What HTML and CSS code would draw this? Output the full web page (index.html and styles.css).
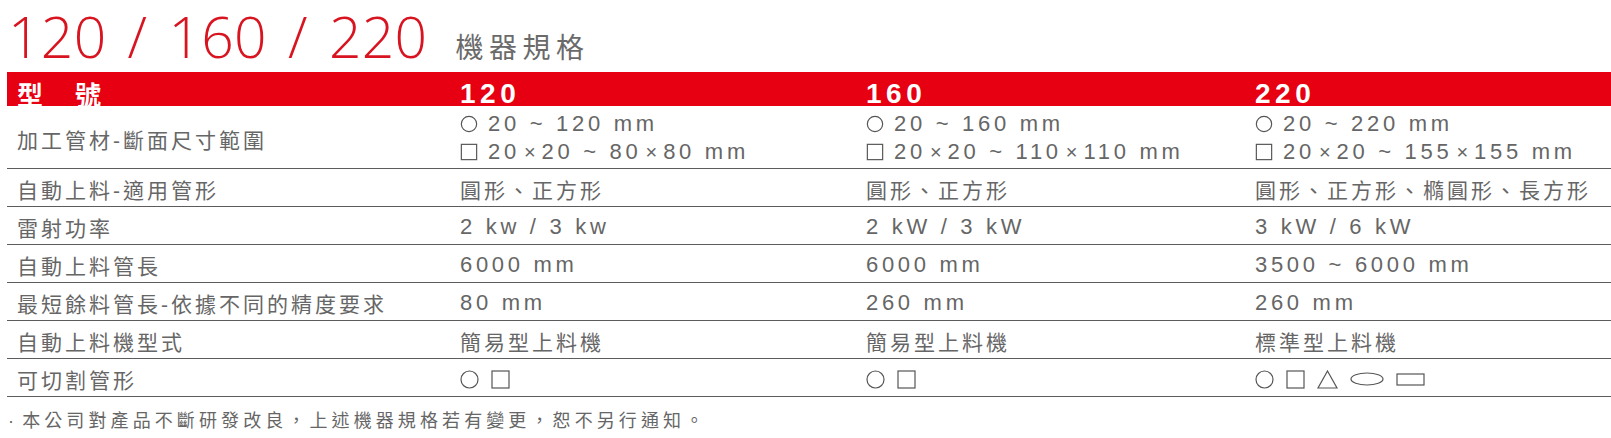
FILE: index.html
```html
<!DOCTYPE html>
<html lang="zh-Hant">
<head>
<meta charset="utf-8">
<title>120 / 160 / 220 機器規格</title>
<link rel="stylesheet" href="styles.css">
</head>
<body>
<div class="page">
  <header class="title">
    <h1 class="models">120 / 160 / 220</h1>
    <span class="sub">機器規格</span>
  </header>

  <div class="spec">
    <div class="row head">
      <div class="cell label">型　號</div>
      <div class="cell">120</div>
      <div class="cell">160</div>
      <div class="cell">220</div>
    </div>

    <div class="row tall">
      <div class="cell label">加工管材-斷面尺寸範圍</div>
      <div class="cell stack">
        <span class="line"><svg class="ic" viewBox="0 0 20 20"><circle cx="10" cy="10" r="8.5"/></svg>20 ~ 120 mm</span>
        <span class="line"><svg class="ic" viewBox="0 0 20 20"><rect x="1.5" y="1.5" width="17" height="17"/></svg>20<span class="x">×</span>20 ~ 80<span class="x">×</span>80 mm</span>
      </div>
      <div class="cell stack">
        <span class="line"><svg class="ic" viewBox="0 0 20 20"><circle cx="10" cy="10" r="8.5"/></svg>20 ~ 160 mm</span>
        <span class="line"><svg class="ic" viewBox="0 0 20 20"><rect x="1.5" y="1.5" width="17" height="17"/></svg>20<span class="x">×</span>20 ~ 110<span class="x">×</span>110 mm</span>
      </div>
      <div class="cell stack">
        <span class="line"><svg class="ic" viewBox="0 0 20 20"><circle cx="10" cy="10" r="8.5"/></svg>20 ~ 220 mm</span>
        <span class="line"><svg class="ic" viewBox="0 0 20 20"><rect x="1.5" y="1.5" width="17" height="17"/></svg>20<span class="x">×</span>20 ~ 155<span class="x">×</span>155 mm</span>
      </div>
    </div>

    <div class="row">
      <div class="cell label">自動上料-適用管形</div>
      <div class="cell cjk">圓形、正方形</div>
      <div class="cell cjk">圓形、正方形</div>
      <div class="cell cjk">圓形、正方形、橢圓形、長方形</div>
    </div>

    <div class="row">
      <div class="cell label">雷射功率</div>
      <div class="cell">2 kw / 3 kw</div>
      <div class="cell">2 kW / 3 kW</div>
      <div class="cell">3 kW / 6 kW</div>
    </div>

    <div class="row">
      <div class="cell label">自動上料管長</div>
      <div class="cell">6000 mm</div>
      <div class="cell">6000 mm</div>
      <div class="cell">3500 ~ 6000 mm</div>
    </div>

    <div class="row">
      <div class="cell label">最短餘料管長-依據不同的精度要求</div>
      <div class="cell">80 mm</div>
      <div class="cell">260 mm</div>
      <div class="cell">260 mm</div>
    </div>

    <div class="row">
      <div class="cell label">自動上料機型式</div>
      <div class="cell cjk">簡易型上料機</div>
      <div class="cell cjk">簡易型上料機</div>
      <div class="cell cjk">標準型上料機</div>
    </div>

    <div class="row">
      <div class="cell label">可切割管形</div>
      <div class="cell shapes">
        <svg class="sh" width="19" height="19" viewBox="0 0 19 19"><circle cx="9.5" cy="9.5" r="8.5"/></svg>
        <svg class="sh" width="19" height="19" viewBox="0 0 19 19"><rect x="1" y="1" width="17" height="17"/></svg>
      </div>
      <div class="cell shapes">
        <svg class="sh" width="19" height="19" viewBox="0 0 19 19"><circle cx="9.5" cy="9.5" r="8.5"/></svg>
        <svg class="sh" width="19" height="19" viewBox="0 0 19 19"><rect x="1" y="1" width="17" height="17"/></svg>
      </div>
      <div class="cell shapes">
        <svg class="sh" width="19" height="19" viewBox="0 0 19 19"><circle cx="9.5" cy="9.5" r="8.5"/></svg>
        <svg class="sh" width="19" height="19" viewBox="0 0 19 19"><rect x="1" y="1" width="17" height="17"/></svg>
        <svg class="sh" width="21" height="19" viewBox="0 0 21 19"><polygon points="10.5,1 20,18 1,18"/></svg>
        <svg class="sh" width="34" height="14" viewBox="0 0 34 14"><ellipse cx="17" cy="7" rx="16" ry="6"/></svg>
        <svg class="sh" width="29" height="13" viewBox="0 0 29 13"><rect x="1" y="1" width="27" height="11"/></svg>
      </div>
    </div>
  </div>

  <p class="note"><span class="dot">·</span> 本公司對產品不斷研發改良，上述機器規格若有變更，恕不另行通知。</p>
</div>
</body>
</html>
```

FILE: styles.css
```css
html, body {
  margin: 0;
  padding: 0;
  background: #ffffff;
}

body {
  font-family: "Liberation Sans", "Noto Sans CJK TC", sans-serif;
  color: #666666;
  overflow: hidden;
}

.page {
  padding-left: 7px;
}

.title {
  display: flex;
  align-items: baseline;
  height: 72px;
  padding-left: 1px;
}

.models {
  margin: 0;
  font-family: "Open Sans", "Roboto", "Liberation Sans", sans-serif;
  font-weight: 300;
  font-size: 57px;
  line-height: 72px;
  letter-spacing: 0.3px;
  color: #d7141f;
  word-spacing: 6px;
  white-space: nowrap;
}

.sub {
  margin-left: 28px;
  font-family: "Noto Sans CJK TC", sans-serif;
  font-size: 28px;
  letter-spacing: 5.5px;
  color: #6a6a6a;
}

.spec {
  width: 1604px;
}

.row {
  display: grid;
  grid-template-columns: 443px 406px 389px 1fr;
  height: 38px;
  border-bottom: 1px solid #5c5c5c;
  box-sizing: border-box;
  font-size: 22px;
  letter-spacing: 3.7px;
}

.label,
.cjk {
  font-size: 21px;
  letter-spacing: 3px;
}

.row.head {
  height: 34px;
  border-bottom: none;
  background: #e60012;
  color: #ffffff;
  font-weight: bold;
  font-size: 28px;
  letter-spacing: 4.5px;
}

.head .label {
  font-size: 26px;
  letter-spacing: 3px;
}

.row.tall {
  height: 63px;
}

.cell {
  display: flex;
  align-items: center;
  padding-left: 10px;
  padding-top: 3px;
  white-space: nowrap;
}

.stack {
  flex-direction: column;
  align-items: flex-start;
  justify-content: center;
  padding-top: 2px;
  line-height: 28px;
}

.line {
  display: flex;
  align-items: center;
}

.x {
  font-size: 20px;
  letter-spacing: 0;
  padding: 0 6px 0 4px;
}

.ic {
  width: 18px;
  height: 18px;
  margin-right: 10px;
  fill: none;
  stroke: #555555;
  stroke-width: 1.3;
}

.shapes {
  gap: 12px;
  padding-top: 3px;
}

.sh {
  fill: none;
  stroke: #555555;
  stroke-width: 1.2;
}

.note {
  margin: 9px 0 0 1px;
  font-family: "Noto Sans CJK TC", sans-serif;
  font-size: 18px;
  letter-spacing: 4.1px;
  color: #666666;
}

.dot {
  font-family: "Liberation Sans", sans-serif;
  letter-spacing: 0;
}
```
